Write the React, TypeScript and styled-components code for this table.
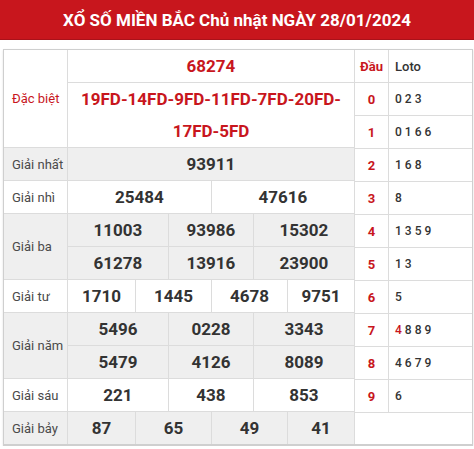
import styled, { createGlobalStyle } from "styled-components"

const RED = "#c8161d"
const LINE = "#dcdcdc"

const GlobalStyle = createGlobalStyle`
  * { box-sizing: border-box; }
  body {
    margin: 0;
    background: #fff;
    font-family: Roboto, "Liberation Sans", Arial, sans-serif;
  }
`

type Prize = {
  label: string
  lines: string[][]
  shaded: boolean
}

const prizes: Prize[] = [
  { label: "Giải nhất", lines: [["93911"]], shaded: true },
  { label: "Giải nhì", lines: [["25484", "47616"]], shaded: false },
  {
    label: "Giải ba",
    lines: [
      ["11003", "93986", "15302"],
      ["61278", "13916", "23900"],
    ],
    shaded: true,
  },
  { label: "Giải tư", lines: [["1710", "1445", "4678", "9751"]], shaded: false },
  {
    label: "Giải năm",
    lines: [
      ["5496", "0228", "3343"],
      ["5479", "4126", "8089"],
    ],
    shaded: true,
  },
  { label: "Giải sáu", lines: [["221", "438", "853"]], shaded: false },
  { label: "Giải bảy", lines: [["87", "65", "49", "41"]], shaded: true },
]

// how many of the 6 tracks each cell takes, by cell count
const spans: Record<number, number[]> = {
  1: [6],
  2: [3, 3],
  3: [2, 2, 2],
  4: [1, 2, 2, 1],
}

// dau -> list of tails, hot marks the tail matching the special prize
const loto: { head: number; tails: number[]; hot?: number }[] = [
  { head: 0, tails: [0, 2, 3] },
  { head: 1, tails: [0, 1, 6, 6] },
  { head: 2, tails: [1, 6, 8] },
  { head: 3, tails: [8] },
  { head: 4, tails: [1, 3, 5, 9] },
  { head: 5, tails: [1, 3] },
  { head: 6, tails: [5] },
  { head: 7, tails: [4, 8, 8, 9], hot: 0 },
  { head: 8, tails: [4, 6, 7, 9] },
  { head: 9, tails: [6] },
]

const Style = {
  Header: styled.div`
    height: 40px;
    background: ${RED};
    border-bottom: 1px solid #a9121a;
    color: #fff;
    font-size: 17px;
    font-weight: 700;
    display: flex;
    align-items: center;
    justify-content: center;
  `,
  Board: styled.div`
    margin: 9px 1px 0 3px;
    display: flex;
    border: 1px solid #cfcfcf;
    border-bottom-width: 2px;
    box-shadow: 0 1px 2px rgba(0, 0, 0, 0.12);
  `,
  Results: styled.div`
    width: 350px;
    display: flex;
    flex-direction: column;
  `,
  PrizeRow: styled.div<{ $shaded: boolean }>`
    display: grid;
    grid-template-columns: 63px 1fr;
    background: ${(p) => (p.$shaded ? "#efefef" : "#fff")};
    border-bottom: 1px solid ${LINE};
    &:last-child {
      border-bottom: none;
    }
  `,
  Label: styled.div<{ $special?: boolean }>`
    display: flex;
    align-items: center;
    padding-left: 8px;
    font-size: 13px;
    white-space: nowrap;
    color: ${(p) => (p.$special ? RED : "#4a4a4a")};
  `,
  Lines: styled.div`
    display: flex;
    flex-direction: column;
  `,
  Line: styled.div`
    display: grid;
    grid-template-columns: 68px 33px 43px 42px 34px 67px;
    border-bottom: 1px solid ${LINE};
    &:last-child {
      border-bottom: none;
    }
  `,
  Cell: styled.div<{ $span: number }>`
    grid-column: span ${(p) => p.$span};
    height: 32px;
    border-left: 1px solid ${LINE};
    display: flex;
    align-items: center;
    justify-content: center;
    font-size: 17px;
    font-weight: 700;
    color: #333;
  `,
  SpecialNumber: styled.div`
    grid-column: span 6;
    height: 32px;
    border-left: 1px solid ${LINE};
    display: flex;
    align-items: center;
    justify-content: center;
    font-size: 17px;
    font-weight: 700;
    color: ${RED};
  `,
  SpecialCodes: styled.div`
    grid-column: span 6;
    border-left: 1px solid ${LINE};
    padding: 0 4px;
    text-align: center;
    line-height: 32px;
    font-size: 17px;
    font-weight: 700;
    color: ${RED};
  `,
  Loto: styled.div`
    flex: 1;
    display: flex;
    flex-direction: column;
    border-left: 1px solid ${LINE};
    background: #fff;
  `,
  LotoRow: styled.div`
    display: grid;
    grid-template-columns: 33px 1fr;
    height: 33px;
    border-bottom: 1px solid ${LINE};
  `,
  Head: styled.div`
    display: flex;
    align-items: center;
    justify-content: center;
    font-size: 13px;
    font-weight: 700;
    color: ${RED};
  `,
  Tails: styled.div<{ $title?: boolean }>`
    display: flex;
    align-items: center;
    padding-left: 6px;
    border-left: 1px solid ${LINE};
    font-size: ${(p) => (p.$title ? "13px" : "12px")};
    font-weight: 500;
    color: #333;
    white-space: pre;
  `,
  Hot: styled.span`
    color: ${RED};
  `,
}

export default function App() {
  return (
    <>
      <GlobalStyle />
      <Style.Header>XỔ SỐ MIỀN BẮC Chủ nhật NGÀY 28/01/2024</Style.Header>
      <Style.Board>
        <Style.Results>
          <Style.PrizeRow $shaded={false}>
            <Style.Label $special>Đặc biệt</Style.Label>
            <Style.Lines>
              <Style.Line>
                <Style.SpecialNumber>68274</Style.SpecialNumber>
              </Style.Line>
              <Style.Line>
                <Style.SpecialCodes>19FD-14FD-9FD-11FD-7FD-20FD-17FD-5FD</Style.SpecialCodes>
              </Style.Line>
            </Style.Lines>
          </Style.PrizeRow>
          {prizes.map((prize) => (
            <Style.PrizeRow key={prize.label} $shaded={prize.shaded}>
              <Style.Label>{prize.label}</Style.Label>
              <Style.Lines>
                {prize.lines.map((line, i) => (
                  <Style.Line key={i}>
                    {line.map((num, j) => (
                      <Style.Cell key={j} $span={spans[line.length][j]}>
                        {num}
                      </Style.Cell>
                    ))}
                  </Style.Line>
                ))}
              </Style.Lines>
            </Style.PrizeRow>
          ))}
        </Style.Results>
        <Style.Loto>
          <Style.LotoRow>
            <Style.Head>Đầu</Style.Head>
            <Style.Tails $title>Loto</Style.Tails>
          </Style.LotoRow>
          {loto.map((row) => (
            <Style.LotoRow key={row.head}>
              <Style.Head>{row.head}</Style.Head>
              <Style.Tails>
                {row.tails.map((t, i) => (
                  <span key={i}>
                    {i > 0 ? " " : ""}
                    {row.hot === i ? <Style.Hot>{t}</Style.Hot> : t}
                  </span>
                ))}
              </Style.Tails>
            </Style.LotoRow>
          ))}
        </Style.Loto>
      </Style.Board>
    </>
  )
}
